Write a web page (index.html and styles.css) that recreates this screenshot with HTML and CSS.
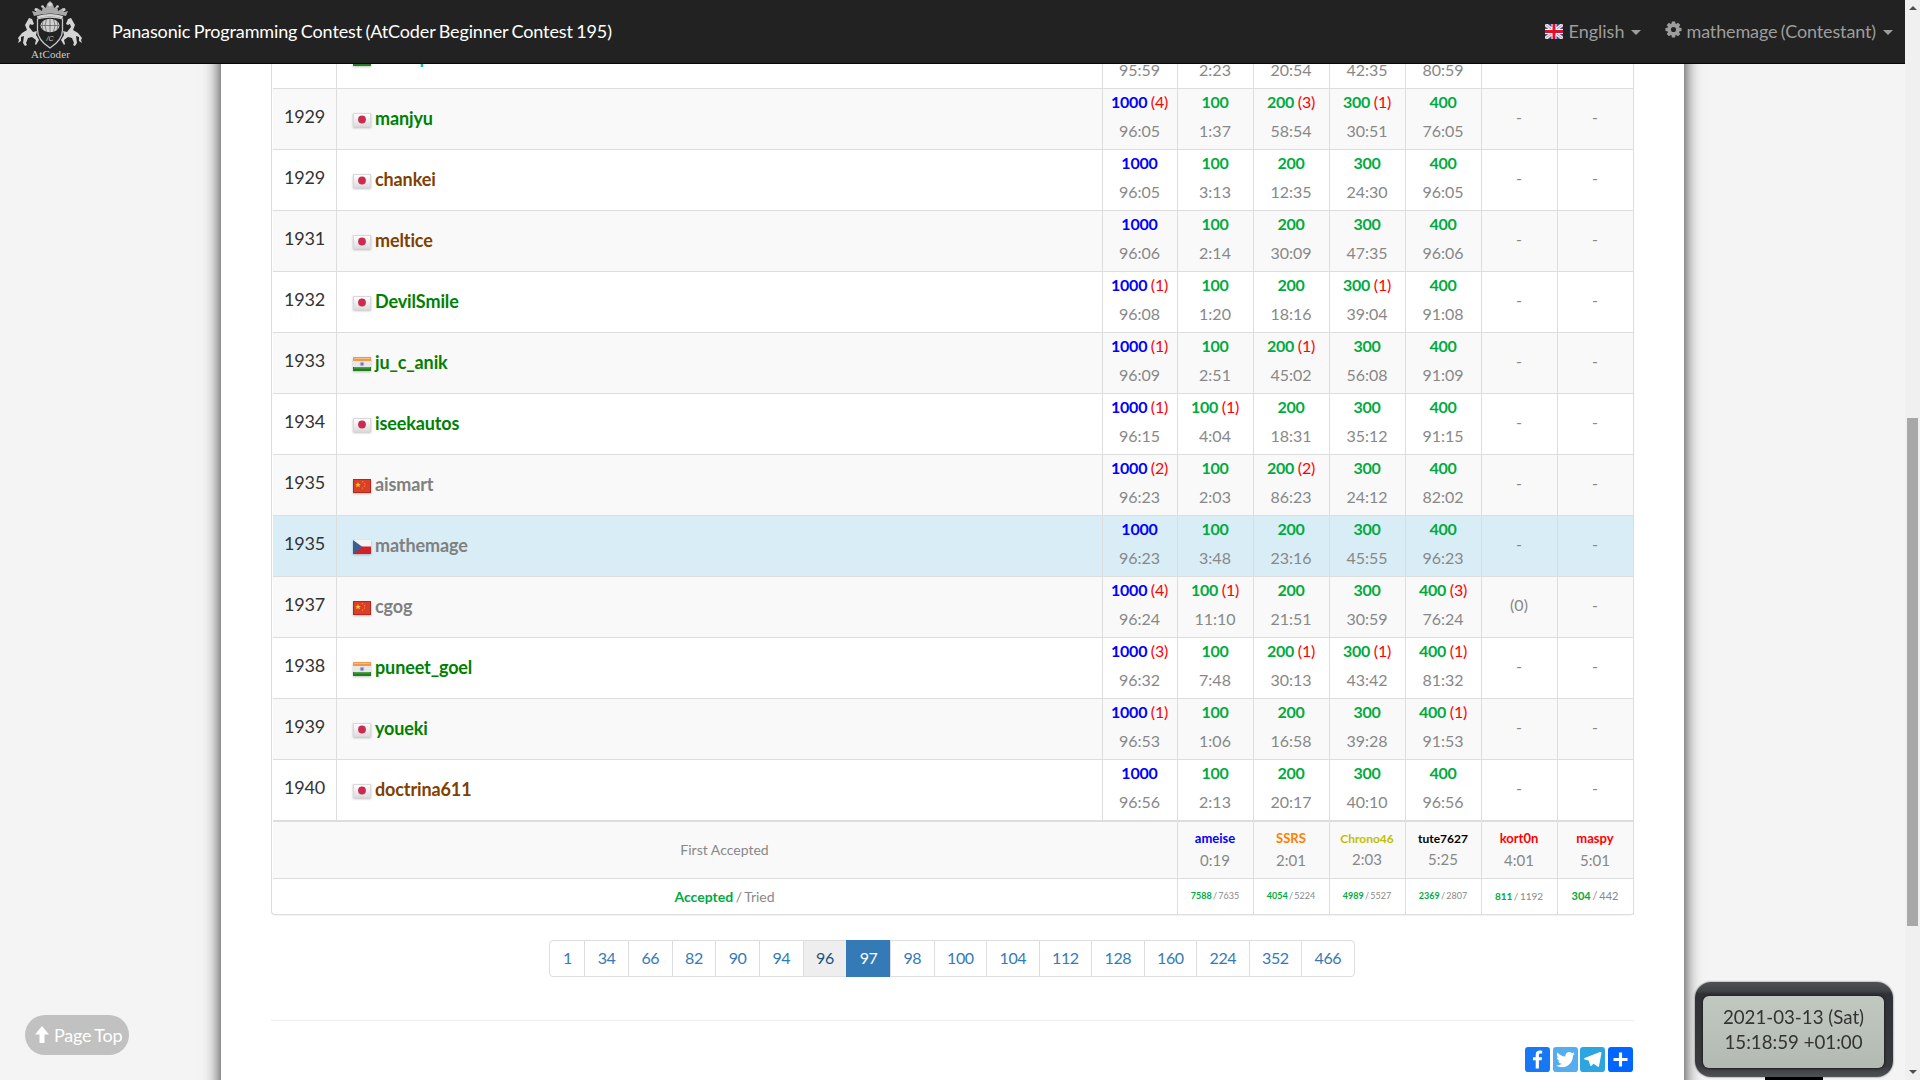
FILE: index.html
```
<!DOCTYPE html>
<html lang="en">
<head>
<meta charset="utf-8">
<title>Standings - Panasonic Programming Contest (AtCoder Beginner Contest 195)</title>
<link rel="stylesheet" href="styles.css">
</head>
<body>
<svg class="defs" width="0" height="0">
  <linearGradient id="gloss" x1="0" y1="0" x2="0" y2="1"><stop offset="0" stop-color="#fff"/><stop offset="1" stop-color="#ddd"/></linearGradient>
  <symbol id="jp" viewBox="0 0 18 14"><rect width="18" height="14" fill="#d9d9d9"/><rect x="1" y="1" width="16" height="12" fill="url(#gloss)"/><circle cx="9" cy="6.500" r="3.900" fill="#cb2b50"/></symbol>
  <symbol id="in" viewBox="0 0 18 14"><rect width="18" height="14" fill="#e8e8e8"/><rect width="18" height="4" fill="#f0994b"/><rect x="1" y="1" width="16" height="1" fill="#f8bd86"/><rect y="10" width="18" height="4" fill="#267a22"/><rect x="1" y="10" width="16" height="1.500" fill="#4ca545"/><circle cx="9" cy="7" r="2.300" fill="#a9abd9"/><circle cx="9" cy="7" r="1" fill="#6062b4"/></symbol>
  <symbol id="cn" viewBox="0 0 18 14"><rect width="18" height="14" fill="#b5281a"/><rect x="1" y="1" width="16" height="12" fill="#dc3f29"/><path d="M5 3l.8 1.900 2 .1-1.500 1.300.6 2L5 7.200 3.200 8.300l.5-2L2.200 5l2-.1z" fill="#fbc02d"/><path d="M9 2h1.200v1.200H9zM11 4h1.200v1.200H11zM11 6.500h1.200v1.200H11zM9 8.500h1.200v1.200H9z" fill="#f08a2b"/></symbol>
  <symbol id="cz" viewBox="0 0 18 14"><rect width="18" height="7" fill="#f3f3f3"/><rect y="6.500" width="18" height="7.500" fill="#d0202b"/><path d="M0 0l9.500 7L0 14z" fill="#3b5f92"/></symbol>
</svg>

<nav class="navbar">
  <svg class="logo" viewBox="0 0 66 60">
    <g fill="#d4d4d4">
      <path d="M17 15l-2-5 4 1 1-4 5 3 1-5 3 2 1-4 2-2 1-1 1 1 2 2 1 4 3-2 1 5 5-3 1 4 4-1-2 5q-16-5-32 0z" fill="#a9a9a9"/>
      <path d="M20 15q13-4 26 0l-.5 2.500q-12.500-4-25 0z"/>
      <circle cx="33" cy="3.500" r="2"/><circle cx="25.500" cy="5.500" r="1.300"/><circle cx="40.500" cy="5.500" r="1.300"/><circle cx="19" cy="8.500" r="1.500"/><circle cx="47" cy="8.500" r="1.500"/>
      <path d="M12 17l3 1 2 5-2 1-2-1-1 3 4 5 4-1-1 4 3 5-3 5-1-1 1-4-4-3-4 1-2 5 1 2-2 1-2-3 1-7-3 1 0 4-3 2 1-3-1-2 4-5 5-3-2-5z"/>
      <path d="M54 17l-3 1-2 5 2 1 2-1 1 3-4 5-4-1 1 4-3 5 3 5 1-1-1-4 4-3 4 1 2 5-1 2 2 1 2-3-1-7 3 1 0 4 3 2-1-3 1-2-4-5-5-3 2-5z"/>
    </g>
    <path d="M20.500 18q12.500-4 25 0v11q0 10-12.500 18Q20.500 39 20.500 29z" fill="#222" stroke="#c8c8c8" stroke-width="1.300"/>
    <ellipse cx="33" cy="24.500" rx="9.500" ry="6.700" fill="#d0d0d0"/>
    <path d="M33 18v13M29.500 18q-3 6.500 0 13M36.500 18q3 6.500 0 13M26 20q-2 4.500 0 9M40 20q2 4.500 0 9M24 24.500h18" fill="none" stroke="#444" stroke-width=".6"/>
    <text x="33" y="39.500" class="logo-mark" text-anchor="middle">/C</text>
    <text x="33.500" y="56.500" class="logo-name" text-anchor="middle" textLength="39">AtCoder</text>
  </svg>
  <span class="contest">Panasonic Programming Contest (AtCoder Beginner Contest 195)</span>
  <span class="menu">
    <svg class="uk" viewBox="0 0 18 15"><rect width="18" height="15" fill="#2d4fa0"/><path d="M0 0l18 15M18 0L0 15" stroke="#eee" stroke-width="3.500"/><path d="M0 0l18 15M18 0L0 15" stroke="#e08080" stroke-width="1"/><path d="M9 0v15M0 7.500h18" stroke="#fff" stroke-width="5"/><path d="M9 0v15M0 7.500h18" stroke="#e0102a" stroke-width="3"/></svg>
    English<i class="caret"></i>
  </span>
  <span class="menu account">
    <svg class="cog" viewBox="0 0 18 18"><g fill="#9d9d9d"><path fill-rule="evenodd" d="M9 2.500a6.500 6.500 0 1 0 0 13 6.500 6.500 0 0 0 0-13zm0 3.800a2.700 2.700 0 1 1 0 5.400 2.700 2.700 0 0 1 0-5.400z"/><g id="t"><path id="a" d="M7.300.500h3.400l.5 3H6.800zM7.300 17.500h3.400l.5-3H6.800z"/><use href="#a" transform="rotate(90 9 9)"/></g><use href="#t" transform="rotate(45 9 9)"/></g></svg>
    mathemage (Contestant)<i class="caret"></i>
  </span>
</nav>

<div class="viewport">
<main class="page">
  <div class="panel">
  <table>
    <colgroup><col class="c-rank"><col class="c-name"><col class="c-total"><col class="c-task"><col class="c-task"><col class="c-task"><col class="c-task"><col class="c-task"><col class="c-task"></colgroup>
    <tbody>
    <tr><td class="rank">1928</td><td class="user cyan"><svg><use href="#in"/></svg>anurap</td><td><b class="sum">1000</b><p>95:59</p></td><td><b>100</b><p>2:23</p></td><td><b>200</b><p>20:54</p></td><td><b>300</b><p>42:35</p></td><td><b>400</b><p>80:59</p></td><td></td><td></td></tr>
    <tr><td class="rank">1929</td><td class="user green"><svg><use href="#jp"/></svg>manjyu</td><td><b class="sum">1000</b> <i>(4)</i><p>96:05</p></td><td><b>100</b><p>1:37</p></td><td><b>200</b> <i>(3)</i><p>58:54</p></td><td><b>300</b> <i>(1)</i><p>30:51</p></td><td><b>400</b><p>76:05</p></td><td>-</td><td>-</td></tr>
    <tr><td class="rank">1929</td><td class="user brown"><svg><use href="#jp"/></svg>chankei</td><td><b class="sum">1000</b><p>96:05</p></td><td><b>100</b><p>3:13</p></td><td><b>200</b><p>12:35</p></td><td><b>300</b><p>24:30</p></td><td><b>400</b><p>96:05</p></td><td>-</td><td>-</td></tr>
    <tr><td class="rank">1931</td><td class="user brown"><svg><use href="#jp"/></svg>meltice</td><td><b class="sum">1000</b><p>96:06</p></td><td><b>100</b><p>2:14</p></td><td><b>200</b><p>30:09</p></td><td><b>300</b><p>47:35</p></td><td><b>400</b><p>96:06</p></td><td>-</td><td>-</td></tr>
    <tr><td class="rank">1932</td><td class="user green"><svg><use href="#jp"/></svg>DevilSmile</td><td><b class="sum">1000</b> <i>(1)</i><p>96:08</p></td><td><b>100</b><p>1:20</p></td><td><b>200</b><p>18:16</p></td><td><b>300</b> <i>(1)</i><p>39:04</p></td><td><b>400</b><p>91:08</p></td><td>-</td><td>-</td></tr>
    <tr><td class="rank">1933</td><td class="user green"><svg><use href="#in"/></svg>ju_c_anik</td><td><b class="sum">1000</b> <i>(1)</i><p>96:09</p></td><td><b>100</b><p>2:51</p></td><td><b>200</b> <i>(1)</i><p>45:02</p></td><td><b>300</b><p>56:08</p></td><td><b>400</b><p>91:09</p></td><td>-</td><td>-</td></tr>
    <tr><td class="rank">1934</td><td class="user green"><svg><use href="#jp"/></svg>iseekautos</td><td><b class="sum">1000</b> <i>(1)</i><p>96:15</p></td><td><b>100</b> <i>(1)</i><p>4:04</p></td><td><b>200</b><p>18:31</p></td><td><b>300</b><p>35:12</p></td><td><b>400</b><p>91:15</p></td><td>-</td><td>-</td></tr>
    <tr><td class="rank">1935</td><td class="user gray"><svg><use href="#cn"/></svg>aismart</td><td><b class="sum">1000</b> <i>(2)</i><p>96:23</p></td><td><b>100</b><p>2:03</p></td><td><b>200</b> <i>(2)</i><p>86:23</p></td><td><b>300</b><p>24:12</p></td><td><b>400</b><p>82:02</p></td><td>-</td><td>-</td></tr>
    <tr class="me"><td class="rank">1935</td><td class="user gray"><svg><use href="#cz"/></svg>mathemage</td><td><b class="sum">1000</b><p>96:23</p></td><td><b>100</b><p>3:48</p></td><td><b>200</b><p>23:16</p></td><td><b>300</b><p>45:55</p></td><td><b>400</b><p>96:23</p></td><td>-</td><td>-</td></tr>
    <tr><td class="rank">1937</td><td class="user gray"><svg><use href="#cn"/></svg>cgog</td><td><b class="sum">1000</b> <i>(4)</i><p>96:24</p></td><td><b>100</b> <i>(1)</i><p>11:10</p></td><td><b>200</b><p>21:51</p></td><td><b>300</b><p>30:59</p></td><td><b>400</b> <i>(3)</i><p>76:24</p></td><td>(0)</td><td>-</td></tr>
    <tr><td class="rank">1938</td><td class="user green"><svg><use href="#in"/></svg>puneet_goel</td><td><b class="sum">1000</b> <i>(3)</i><p>96:32</p></td><td><b>100</b><p>7:48</p></td><td><b>200</b> <i>(1)</i><p>30:13</p></td><td><b>300</b> <i>(1)</i><p>43:42</p></td><td><b>400</b> <i>(1)</i><p>81:32</p></td><td>-</td><td>-</td></tr>
    <tr><td class="rank">1939</td><td class="user green"><svg><use href="#jp"/></svg>youeki</td><td><b class="sum">1000</b> <i>(1)</i><p>96:53</p></td><td><b>100</b><p>1:06</p></td><td><b>200</b><p>16:58</p></td><td><b>300</b><p>39:28</p></td><td><b>400</b> <i>(1)</i><p>91:53</p></td><td>-</td><td>-</td></tr>
    <tr><td class="rank">1940</td><td class="user brown"><svg><use href="#jp"/></svg>doctrina611</td><td><b class="sum">1000</b><p>96:56</p></td><td><b>100</b><p>2:13</p></td><td><b>200</b><p>20:17</p></td><td><b>300</b><p>40:10</p></td><td><b>400</b><p>96:56</p></td><td>-</td><td>-</td></tr>
    </tbody>
    <tfoot>
    <tr class="first"><td class="label" colspan="3">First Accepted</td><td><b class="blue">ameise</b><p>0:19</p></td><td><b class="orange">SSRS</b><p>2:01</p></td><td class="long"><b class="yellow">Chrono46</b><p>2:03</p></td><td class="long"><b class="black">tute7627</b><p>5:25</p></td><td><b class="red">kort0n</b><p>4:01</p></td><td><b class="red">maspy</b><p>5:01</p></td></tr>
    <tr class="tried"><td class="label" colspan="3"><b>Accepted</b> / Tried</td><td class="s8"><b>7588</b> / 7635</td><td class="s8"><b>4054</b> / 5224</td><td class="s8"><b>4989</b> / 5527</td><td class="s8"><b>2369</b> / 2807</td><td class="s9"><b>811</b> / 1192</td><td class="s10"><b>304</b> / 442</td></tr>
    </tfoot>
  </table>
  </div>

  <ul class="pagination"><li>1</li><li>34</li><li>66</li><li>82</li><li>90</li><li>94</li><li class="hover">96</li><li class="active">97</li><li>98</li><li>100</li><li>104</li><li>112</li><li>128</li><li>160</li><li>224</li><li>352</li><li>466</li></ul>

  <hr>
  <div class="share">
    <svg viewBox="0 0 32 32"><rect width="32" height="32" rx="4" fill="#1877f2"/><path fill="#fff" d="M17.800 27.500V17h3.500l.5-4h-4v-2.600c0-1.200.3-2 2-2H22V4.700c-.4 0-1.700-.2-3.100-.2-3 0-5.200 1.900-5.200 5.300V13h-3.500v4h3.500v10.500h4.100z"/></svg>
    <svg viewBox="0 0 32 32"><rect width="32" height="32" rx="4" fill="#55acee"/><path fill="#fff" d="M28 8.600a9.900 9.900 0 0 1-2.800.8 5 5 0 0 0 2.200-2.700c-1 .5-2 1-3.100 1.200a4.900 4.900 0 0 0-8.500 3.300c0 .4 0 .8.100 1.100-4.200-.2-7.800-2.200-10.200-5.200a5 5 0 0 0-.7 2.500c0 1.700.9 3.200 2.200 4.100a4.900 4.900 0 0 1-2.200-.6v.1c0 2.400 1.700 4.400 3.900 4.800a4.900 4.900 0 0 1-2.200.1 4.900 4.900 0 0 0 4.600 3.400A9.900 9.900 0 0 1 4 23.600a14 14 0 0 0 7.500 2.200c9.100 0 14-7.500 14-14v-.6A10 10 0 0 0 28 8.600z"/></svg>
    <svg viewBox="0 0 32 32"><rect width="32" height="32" rx="4" fill="#2ca5e0"/><path fill="#fff" d="M25.500 6.500L6 14.100c-1 .4-.9 1.500.1 1.800l4.900 1.500L13 23.500c.2.900 1.100 1.100 1.700.5l2.700-2.600 5 3.700c1 .6 1.700.3 2-.9l3-16.200c.2-1.300-.6-1.900-1.900-1.500z"/></svg>
    <svg viewBox="0 0 32 32"><rect width="32" height="32" rx="4" fill="#0166ff"/><path fill="#fff" d="M14 7h4v18h-4zM7 14h18v4H7z"/></svg>
  </div>
</main>
</div>

<div class="page-top"><svg viewBox="0 0 14 17"><path d="M7 0l7 8.500H9.500V17h-5V8.500H0z" fill="#fff"/></svg>Page Top</div>

<div class="clock">
  <div class="case"><div class="lcd">2021-03-13 (Sat)<br>15:18:59 +01:00</div></div>
  <div class="stand"></div>
</div>

<div class="scrollbar"><i class="up"></i><i class="thumb"></i><i class="down"></i></div>
</body>
</html>
```
FILE: styles.css
```
* { box-sizing: border-box; }
html, body { height: 100%; }
body { margin: 0; overflow: hidden; background: #f4f4f4; color: #333; font: 16px/23px Lato, sans-serif; }
.defs { position: absolute; }

.navbar { position: fixed; z-index: 5; top: 0; left: 0; right: 15px; height: 64px; display: flex; align-items: center; padding: 0 12px 1px 17px; background: #222; border-bottom: 1px solid #080808; font-size: 18px; color: #9d9d9d; }
.logo { width: 66px; height: 60px; margin-right: 29px; }
.logo-mark { font: italic 7px "Liberation Sans", sans-serif; fill: #ccc; }
.logo-name { font: 11px "Liberation Serif", serif; fill: #ccc; }
.contest { color: #fff; margin-right: auto; letter-spacing: -.13px; word-spacing: -1px; }
.menu { display: flex; align-items: center; white-space: nowrap; }
.menu.account { margin-left: 24px; letter-spacing: -.13px; word-spacing: -1px; }
.uk { width: 18px; height: 15px; margin-right: 5px; }
.cog { width: 17px; height: 17px; margin: -4px 4px 0 0; }
.caret { border: 5px solid transparent; border-top-color: #9d9d9d; border-bottom: 0; margin: 2px 0 0 7px; }

.viewport { height: 1080px; overflow: hidden; padding-right: 15px; }
.page { width: 1463px; height: 1200px; margin: 0 auto; padding: 28px 50px 0; background: #fff; box-shadow: 0 0 16px rgba(0,0,0,.85); }
.panel { height: 887px; border: 1px solid #ddd; border-right: 0; border-top: 0; border-radius: 0 0 4px 4px; box-shadow: 0 1px 1px rgba(0,0,0,.05); padding-left: 1px; }
table { width: 1361px; table-layout: fixed; border-spacing: 0; text-align: center; color: #888; }
.c-rank { width: 64px; } .c-name { width: 766px; } .c-total { width: 75px; } .c-task { width: 76px; }
td { padding: 0 1px 6px 0; border-right: 1px solid #ddd; border-bottom: 1px solid #ddd; height: 61px; line-height: 23px; }
tbody tr:nth-child(even) td, .first td { background: #f9f9f9; }
tbody tr.me td { background: #d9edf7; }
p { margin: 0; }
tbody p { margin-top: 6px; }
td b { color: #00aa3e; }
tbody b { letter-spacing: -.2px; }
td b.sum { color: #00f; }
td i { font-style: normal; color: red; margin-left: -.5px; letter-spacing: -.2px; }
.rank { font-size: 18px; letter-spacing: -.25px; color: #333; padding: 0 0 6px; }
td.user { text-align: left; padding: 0 0 2px 16px; font-size: 18px; font-weight: bold; letter-spacing: -.12px; }
td.user svg { width: 18px; height: 14px; margin-right: 4px; vertical-align: -2px; filter: drop-shadow(0 1px 1px rgba(0,0,0,.25)); }
.green { color: green; } .brown { color: #804000; } .gray { color: gray; } .cyan { color: #00c0c0; }
.first td { height: 58px; font-size: 14px; line-height: 22px; padding-bottom: 2px; border-top: 1px solid #ddd; }
.first td b { font-size: 13px; }
.first td p { font-size: 15px; }
.first .long { line-height: 21px; padding-bottom: 3px; }
.first .long b { font-size: 12px; }
.first b.blue { color: #00f; } .first b.orange { color: #ff8000; } .first b.yellow { color: #c0c000; } .first b.black { color: #000; } .first b.red { color: red; }
.tried td { height: 36px; line-height: 22px; padding-bottom: 2px; border-bottom: 0; word-spacing: -1px; }
tfoot td.label { font-size: 14px; padding-bottom: 0; }
.tried td.s8 { font-size: 9px; } .tried td.s9 { font-size: 10px; } .tried td.s10 { font-size: 11px; }

.pagination { display: flex; justify-content: center; list-style: none; margin: 25px 0 43px; padding: 0; color: #337ab7; }
.pagination li { padding: 5px 12.500px; border: 1px solid #ddd; margin-left: -1px; line-height: 23px; height: 37px; letter-spacing: -.45px; }
.pagination li:first-child { border-radius: 4px 0 0 4px; }
.pagination li:last-child { border-radius: 0 4px 4px 0; }
.pagination .hover { background: #eee; color: #23527c; }
.pagination .active { background: #337ab7; border-color: #337ab7; color: #fff; }
hr { border: 0; border-top: 1px solid #eee; margin: 0 0 26px; }
.share { display: flex; justify-content: flex-end; gap: 2.670px; padding-right: 1px; }
.share svg { width: 25px; height: 25px; }

.page-top { position: fixed; left: 25px; top: 1015px; width: 104px; height: 40px; border-radius: 20px; background: #c1c1c1; color: #fff; font-size: 18px; letter-spacing: -.2px; word-spacing: -1px; display: flex; align-items: center; padding-left: 10px; }
.page-top svg { width: 14px; height: 17px; margin: -1px 5px 0 0; }

.clock { position: fixed; left: 1695px; top: 982px; width: 198px; }
.case { height: 95px; padding: 14px 9px 9px 8px; border-radius: 16px; background: linear-gradient(#505155 0, #414246 9px, #303136 12px, #38393d 84px, #515256 100%); box-shadow: 0 0 2px #555; }
.lcd { height: 72px; border-radius: 6px; background: linear-gradient(#c0c8c0, #b3bab3); box-shadow: 0 0 2px 1px #222; color: #333; text-align: center; font-size: 18.700px; line-height: 25px; padding-top: 9px; }
.stand { width: 58px; height: 6px; margin-left: 70px; background: #000; }

.scrollbar { position: fixed; z-index: 6; top: 0; right: 0; bottom: 0; width: 15px; background: #f0f0f0; display: flex; flex-direction: column; align-items: center; }
.up { border: 4px solid transparent; border-top: 0; border-bottom-color: #505050; margin-top: 6px; }
.thumb { width: 11px; height: 508px; margin-top: 408px; background: #a8a8a8; }
.down { border: 4px solid transparent; border-bottom: 0; border-top-color: #505050; margin-top: auto; margin-bottom: 6px; }
```
